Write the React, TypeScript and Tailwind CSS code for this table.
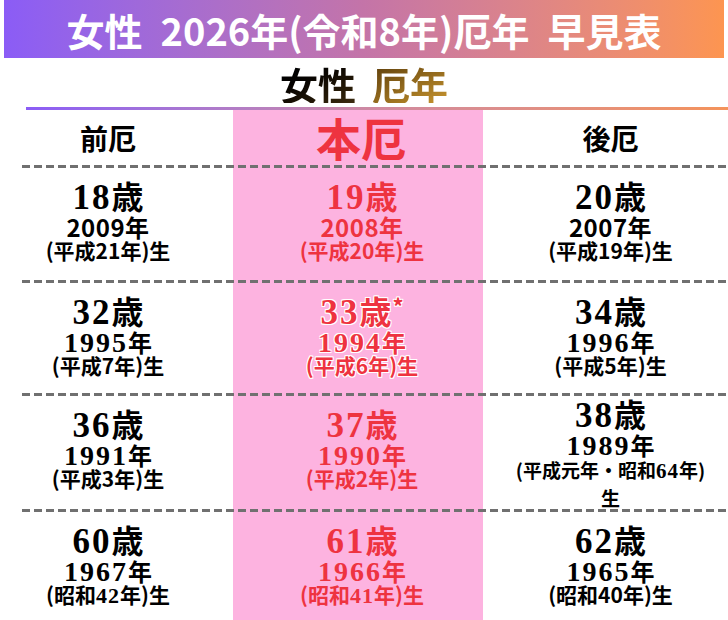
import React from 'react'

type Cell = {
  age: string
  star?: boolean
  year: string
  era: string
  eraTail?: string
  yearSerif?: boolean
  eraSerif?: boolean
}

type Row = { cells: [Cell, Cell, Cell]; height: string }

const rows: Row[] = [
  {
    height: 'h-[112px]',
    cells: [
      { age: '18歳', year: '2009年', era: '(平成21年)生' },
      { age: '19歳', year: '2008年', era: '(平成20年)生' },
      { age: '20歳', year: '2007年', era: '(平成19年)生' },
    ],
  },
  {
    height: 'h-[110px]',
    cells: [
      { age: '32歳', year: '1995年', era: '(平成7年)生', yearSerif: true },
      { age: '33歳', star: true, year: '1994年', era: '(平成6年)生', yearSerif: true },
      { age: '34歳', year: '1996年', era: '(平成5年)生', yearSerif: true },
    ],
  },
  {
    height: 'h-[113px]',
    cells: [
      { age: '36歳', year: '1991年', era: '(平成3年)生', yearSerif: true },
      { age: '37歳', year: '1990年', era: '(平成2年)生', yearSerif: true },
      { age: '38歳', year: '1989年', era: '(平成元年・昭和64年)', eraTail: '生', yearSerif: true, eraSerif: true },
    ],
  },
  {
    height: 'h-[108px]',
    cells: [
      { age: '60歳', year: '1967年', era: '(昭和42年)生', yearSerif: true, eraSerif: true },
      { age: '61歳', year: '1966年', era: '(昭和41年)生', yearSerif: true, eraSerif: true },
      { age: '62歳', year: '1965年', era: '(昭和40年)生', yearSerif: true },
    ],
  },
]

const sans = "font-['Noto_Sans_CJK_JP',sans-serif]"
const serif = "font-['Liberation_Serif','Noto_Sans_CJK_JP',serif]"

// digits get their own (serif) size, the rest stays in the sans face
function Mixed({ text, digits }: { text: string; digits: string }) {
  return (
    <>
      {text.split(/(\d+)/).map((part, i) =>
        /^\d+$/.test(part) ? (
          <span key={i} className={digits}>
            {part}
          </span>
        ) : (
          <span key={i}>{part}</span>
        ),
      )}
    </>
  )
}

function Dashes() {
  return <div className="ml-[22px] h-[3px] bg-[repeating-linear-gradient(90deg,#707070_0_8px,transparent_8px_12px)]" />
}

function AgeCell({ cell, col, outline }: { cell: Cell; col: number; outline?: boolean }) {
  const color = col === 1 ? 'text-[#ee3340]' : 'text-black'
  const glow = outline
    ? '[text-shadow:1px_1px_0_#fff,-1px_-1px_0_#fff,1px_-1px_0_#fff,-1px_1px_0_#fff,0_1px_0_#fff,0_-1px_0_#fff]'
    : ''
  const pad = col === 0 ? 'pr-[17px]' : col === 2 ? 'pl-[10px]' : 'pl-[8px]'
  const top = cell.eraTail ? 'pt-0' : 'pt-[10px]'
  return (
    <div className={`flex flex-col items-center font-bold ${sans} ${color} ${glow} ${pad} ${top}`}>
      <div className="text-[32px] leading-[34px]">
        <Mixed text={cell.age} digits={`${serif} text-[35px] leading-[26px] tracking-[2px]`} />
        {cell.star && <span className="relative -top-[9px] ml-[1px] text-[22px] leading-[10px]">*</span>}
      </div>
      <div className="mt-[2px] text-[24px] leading-[25px]">
        {cell.yearSerif ? (
          <Mixed text={cell.year} digits={`${serif} text-[28px] leading-[18px] tracking-[2px]`} />
        ) : (
          <span className="tracking-[0.5px]">{cell.year}</span>
        )}
      </div>
      {cell.eraTail ? (
        <>
          <div className="mt-[2px] text-[19px] leading-[22px]">
            <Mixed text={cell.era} digits={`${serif} text-[21px] leading-[16px] tracking-[1px]`} />
          </div>
          <div className="mt-[6px] text-[19px] leading-[22px]">{cell.eraTail}</div>
        </>
      ) : (
        <div className="text-[21px] leading-[22px]">
          {cell.eraSerif ? (
            <Mixed text={cell.era} digits={`${serif} text-[22px] leading-[16px] tracking-[1px]`} />
          ) : (
            cell.era
          )}
        </div>
      )}
    </div>
  )
}

export default function App() {
  return (
    <div className={`h-[620px] w-[728px] overflow-hidden bg-white ${sans}`}>
      <div className="mx-[4px] flex h-[58px] items-center justify-center bg-gradient-to-r from-[#8b5cf6] via-[#c474a8] to-[#fd9550] text-[38px] font-bold text-white">
        <span>女性</span>
        <span className="w-[18px]" />
        <span>2026年(令和8年)厄年</span>
        <span className="w-[18px]" />
        <span>早見表</span>
      </div>
      <div className="flex h-[49px] items-center justify-center gap-[16px] pt-[2px] text-[38px] font-bold leading-none">
        <span className="bg-gradient-to-br from-[#000000] to-[#3d2c10] bg-clip-text text-transparent">女性</span>
        <span className="bg-gradient-to-br from-[#5e3f0c] to-[#c9962f] bg-clip-text text-transparent">厄年</span>
      </div>
      <div className="ml-[26px] h-[3px] bg-gradient-to-r from-[#8b5cf6] via-[#d08aa0] to-[#f4935a]" />

      <div className="bg-[linear-gradient(90deg,transparent_233px,#fdb3e0_233px,#fdb3e0_483px,transparent_483px)]">
        <div className="grid h-[55px] grid-cols-[233px_250px_1fr] items-center font-bold">
          <div className="pr-[17px] text-center text-[28px] text-black">前厄</div>
          <div className="pl-[6px] text-center text-[45px] leading-none text-[#ee3340]">本厄</div>
          <div className="pl-[10px] text-center text-[28px] text-black">後厄</div>
        </div>
        {rows.map((row, i) => (
          <React.Fragment key={i}>
            <Dashes />
            <div className={`grid grid-cols-[233px_250px_1fr] ${row.height}`}>
              {row.cells.map((cell, c) => (
                <AgeCell key={c} cell={cell} col={c} outline={c === 1 && i === 1} />
              ))}
            </div>
          </React.Fragment>
        ))}
      </div>
    </div>
  )
}
